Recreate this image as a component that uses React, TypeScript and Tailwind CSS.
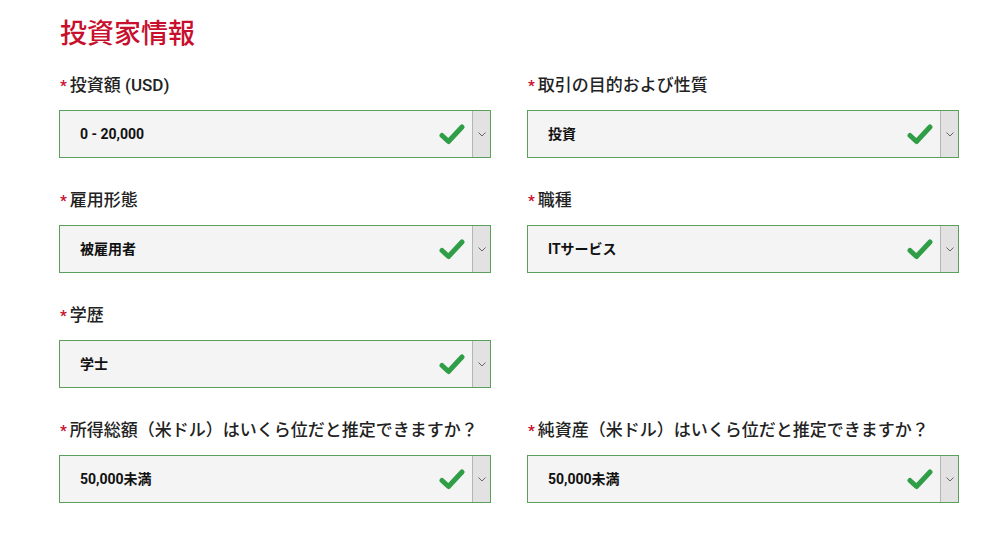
import React from 'react';

interface Field {
  label: string;
  value: string;
}

const rows: (Field | null)[][] = [
  [
    { label: '投資額 (USD)', value: '0 - 20,000' },
    { label: '取引の目的および性質', value: '投資' },
  ],
  [
    { label: '雇用形態', value: '被雇用者' },
    { label: '職種', value: 'ITサービス' },
  ],
  [{ label: '学歴', value: '学士' }, null],
  [
    { label: '所得総額（米ドル）はいくら位だと推定できますか？', value: '50,000未満' },
    { label: '純資産（米ドル）はいくら位だと推定できますか？', value: '50,000未満' },
  ],
];

function Check() {
  return (
    <svg width="26" height="22" viewBox="0 0 26 22" className="shrink-0">
      <path d="M3 12.5 L9.5 18.5 L23 4" fill="none" stroke="#2f9e46" strokeWidth="5" strokeLinecap="round" strokeLinejoin="round" />
    </svg>
  );
}

function SelectField({ field }: { field: Field }) {
  return (
    <div>
      <div className="flex items-center h-[22px] text-[17px] font-medium text-[#222]">
        <span className="text-[#c8102e] text-[15px] font-bold mr-[3px] ml-[1px]">*</span>
        {field.label}
      </div>
      <div className="mt-[13px] h-[48px] flex items-stretch border border-[#5c9e5c] bg-[#f4f4f4]">
        <div className="flex-1 flex items-center pl-[20px] text-[14px] font-bold text-[#111]">{field.value}</div>
        <div className="flex items-center pr-[7px]">
          <Check />
        </div>
        <div className="w-[18px] flex items-center justify-center bg-[#e2e2e2] border-l border-[#b5b5b5]">
          <svg width="8" height="5" viewBox="0 0 8 5">
            <path d="M0.5 0.5 L4 4 L7.5 0.5" fill="none" stroke="#666" strokeWidth="1" />
          </svg>
        </div>
      </div>
    </div>
  );
}

export default function App() {
  return (
    <div
      className="min-h-[536px] bg-white pl-[59px] pr-[48px] pt-[16px]"
      style={{ fontFamily: 'Roboto, "Noto Sans CJK JP", sans-serif' }}
    >
      <h1 className="text-[27px] leading-[36px] font-medium text-[#c8102e] ml-[1px]">投資家情報</h1>
      <div className="mt-[23px] flex flex-col gap-[32px]">
        {rows.map((row, i) => (
          <div key={i} className="grid grid-cols-[432px_432px] gap-[36px]">
            {row.map((f, j) => (f ? <SelectField key={j} field={f} /> : <div key={j} />))}
          </div>
        ))}
      </div>
    </div>
  );
}
